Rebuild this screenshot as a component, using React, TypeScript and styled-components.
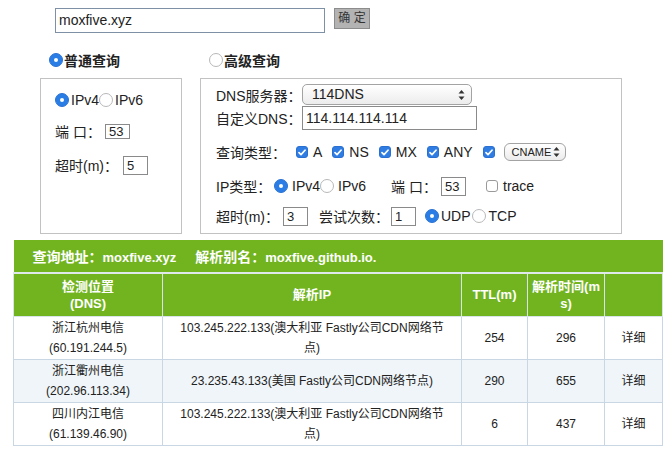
import React from "react";
import styled, { createGlobalStyle, css } from "styled-components";

const Global = createGlobalStyle`
  html, body { margin: 0; padding: 0; background: #fff; }
  body { font-family: "Liberation Sans", "Noto Sans CJK SC", sans-serif; color: #222; font-size: 14px; }
  * { box-sizing: border-box; }
`;

const Page = styled.div`
  width: 669px;
  height: 449px;
  overflow: hidden;
`;

const TopBar = styled.div`
  display: flex;
  align-items: flex-start;
  gap: 9px;
  padding: 8px 0 0 55px;
`;

const DomainInput = styled.div`
  width: 270px;
  height: 25px;
  border: 1px solid #7d90a6;
  padding-left: 3px;
  font-size: 14px;
  line-height: 23px;
`;

const SubmitButton = styled.div`
  width: 36px;
  height: 21px;
  background: #b3b3b3;
  border: 1px solid #8c8c8c;
  font-size: 12px;
  line-height: 19px;
  text-align: center;
  color: #333;
  white-space: nowrap;
`;

const ModeRow = styled.div`
  display: flex;
  align-items: center;
  height: 20px;
  margin-top: 17px;
  padding-left: 49px;
`;

const ModeItem = styled.label<{ $w?: number }>`
  display: flex;
  align-items: center;
  gap: 1px;
  width: ${(p) => (p.$w ? `${p.$w}px` : "auto")};
  font-size: 14px;
  font-weight: bold;
  color: #222;
`;

const Radio = styled.span<{ $on?: boolean }>`
  display: inline-block;
  flex: none;
  width: 14px;
  height: 14px;
  border-radius: 50%;
  ${(p) =>
    p.$on
      ? css`
          background: #2b7de6;
          border: 1px solid #2a72d4;
          &::after {
            content: "";
            display: block;
            width: 4px;
            height: 4px;
            border-radius: 50%;
            background: #fff;
            margin: 4px auto 0;
          }
        `
      : css`
          background: #fff;
          border: 1px solid #b8b8b8;
        `}
`;

const Panels = styled.div`
  display: flex;
  gap: 18px;
  margin-top: 8px;
  padding-left: 40px;
`;

const Box = styled.div<{ $w: number }>`
  width: ${(p) => p.$w}px;
  height: 156px;
  border: 1px solid #c2c2c2;
`;

const LeftInner = styled.div`
  padding: 11px 0 0 14px;
`;

const RightInner = styled.div`
  padding: 5px 0 0 15px;
`;

const Row = styled.div<{ $h: number; $mt?: number }>`
  display: flex;
  align-items: center;
  height: ${(p) => p.$h}px;
  margin-top: ${(p) => p.$mt ?? 0}px;
  font-size: 14px;
`;

const Label = styled.span<{ $w?: number; $ml?: number }>`
  display: inline-block;
  flex: none;
  width: ${(p) => (p.$w ? `${p.$w}px` : "auto")};
  margin-left: ${(p) => p.$ml ?? 0}px;
  white-space: nowrap;
`;

const OptText = styled.span<{ $ml?: number; $mr?: number }>`
  margin-left: ${(p) => p.$ml ?? 3}px;
  margin-right: ${(p) => p.$mr ?? 0}px;
  white-space: nowrap;
`;

const SmallInput = styled.span<{ $ml?: number; $h?: number }>`
  display: inline-block;
  flex: none;
  width: 25px;
  height: ${(p) => p.$h ?? 19}px;
  margin-left: ${(p) => p.$ml ?? 0}px;
  border: 1px solid #8a8a8a;
  font-size: 13px;
  line-height: ${(p) => (p.$h ?? 19) - 2}px;
  padding-left: 3px;
`;

const Select = styled.div<{ $w: number; $h: number }>`
  position: relative;
  flex: none;
  width: ${(p) => p.$w}px;
  height: ${(p) => p.$h}px;
  border: 1px solid #a3a3a3;
  border-radius: 5px;
  background: linear-gradient(#ffffff, #ececec);
  font-size: 14px;
  line-height: ${(p) => p.$h - 2}px;
  padding-left: 9px;
  color: #222;
  white-space: nowrap;
`;

const SmallSelect = styled(Select)`
  font-size: 11px;
  padding-left: 7px;
  margin-left: 9px;
  border-radius: 6px;
`;

const Arrows = styled.svg<{ $r?: number }>`
  position: absolute;
  right: ${(p) => p.$r ?? 6}px;
  top: 50%;
  transform: translateY(-50%);
`;

const TextField = styled.div`
  width: 175px;
  height: 24px;
  border: 1px solid #8a8a8a;
  font-size: 14px;
  line-height: 22px;
  padding-left: 3px;
`;

const Check = styled.span<{ $on?: boolean; $ml?: number }>`
  display: inline-flex;
  align-items: center;
  justify-content: center;
  flex: none;
  width: 12px;
  height: 12px;
  margin-left: ${(p) => p.$ml ?? 0}px;
  border-radius: 3px;
  ${(p) =>
    p.$on
      ? css`
          background: #2f7de3;
          border: 1px solid #2a70d0;
        `
      : css`
          background: #fff;
          border: 1px solid #9a9a9a;
        `}
`;

const Table = styled.table`
  margin: 6px 0 0 13px;
  width: 649px;
  border-collapse: collapse;
  table-layout: fixed;
`;

const Col = styled.col<{ $w: number }>`
  width: ${(p) => p.$w}px;
`;

const TitleCell = styled.th`
  background: #71b41f;
  color: #fff;
  height: 33px;
  text-align: left;
  padding: 0 0 0 19px;
  font-size: 14px;
  font-weight: bold;
  border-bottom: 2px solid #dfe8ea;
  white-space: nowrap;
`;

const TitleValue = styled.span<{ $mr?: number }>`
  font-size: 13px;
  margin-right: ${(p) => p.$mr ?? 0}px;
`;

const HeadCell = styled.th`
  background: #71b41f;
  color: #fff;
  height: 43px;
  font-size: 13px;
  line-height: 17px;
  font-weight: bold;
  text-align: center;
  border: 1px solid #d9e4ea;
  border-top: none;
  padding: 0 2px;
  word-break: break-all;
`;

const DataRow = styled.tr<{ $alt?: boolean }>`
  background: ${(p) => (p.$alt ? "#eff5f9" : "#fff")};
`;

const Cell = styled.td<{ $pad?: number }>`
  height: 43px;
  border: 1px solid #c9d7e4;
  text-align: center;
  font-size: 12px;
  line-height: 20px;
  color: #222;
  padding: 0 ${(p) => p.$pad ?? 2}px;
`;

const ArrowIcon = ({ r }: { r?: number }) => (
  <Arrows $r={r} width="7" height="11" viewBox="0 0 7 11">
    <path d="M3.5 0.5 L6.5 4 L0.5 4 Z" fill="#333" />
    <path d="M3.5 10.5 L6.5 7 L0.5 7 Z" fill="#333" />
  </Arrows>
);

const Tick = () => (
  <svg width="8" height="7" viewBox="0 0 8 7">
    <path d="M1 3.6 L3 5.6 L7 1.2" fill="none" stroke="#fff" strokeWidth="1.7" strokeLinecap="round" strokeLinejoin="round" />
  </svg>
);

const rows = [
  { loc: "浙江杭州电信", ip: "(60.191.244.5)", res: "103.245.222.133(澳大利亚 Fastly公司CDN网络节点)", ttl: "254", time: "296" },
  { loc: "浙江衢州电信", ip: "(202.96.113.34)", res: "23.235.43.133(美国 Fastly公司CDN网络节点)", ttl: "290", time: "655" },
  { loc: "四川内江电信", ip: "(61.139.46.90)", res: "103.245.222.133(澳大利亚 Fastly公司CDN网络节点)", ttl: "6", time: "437" },
];

export default function App() {
  return (
    <Page>
      <Global />
      <TopBar>
        <DomainInput>moxfive.xyz</DomainInput>
        <SubmitButton>确&nbsp;定</SubmitButton>
      </TopBar>
      <ModeRow>
        <ModeItem $w={160}>
          <Radio $on />
          普通查询
        </ModeItem>
        <ModeItem>
          <Radio />
          高级查询
        </ModeItem>
      </ModeRow>
      <Panels>
        <Box $w={142}>
          <LeftInner>
            <Row $h={20}>
              <Radio $on />
              <OptText $ml={2}>IPv4</OptText>
              <Radio />
              <OptText $ml={2}>IPv6</OptText>
            </Row>
            <Row $h={20} $mt={11}>
              <Label $w={50}>端 口：</Label>
              <SmallInput $h={15}>53</SmallInput>
            </Row>
            <Row $h={20} $mt={14}>
              <Label $w={68}>超时(m)：</Label>
              <SmallInput $h={19}>5</SmallInput>
            </Row>
          </LeftInner>
        </Box>
        <Box $w={422}>
          <RightInner>
            <Row $h={21}>
              <Label $w={86}>DNS服务器：</Label>
              <Select $w={170} $h={21}>
                114DNS
                <ArrowIcon />
              </Select>
            </Row>
            <Row $h={24} $mt={1}>
              <Label $w={86}>自定义DNS：</Label>
              <TextField>114.114.114.114</TextField>
            </Row>
            <Row $h={24} $mt={10}>
              <Label $w={80}>查询类型：</Label>
              <Check $on><Tick /></Check>
              <OptText $ml={5} $mr={10}>A</OptText>
              <Check $on><Tick /></Check>
              <OptText $ml={5} $mr={10}>NS</OptText>
              <Check $on><Tick /></Check>
              <OptText $ml={5} $mr={10}>MX</OptText>
              <Check $on><Tick /></Check>
              <OptText $ml={5} $mr={10}>ANY</OptText>
              <Check $on><Tick /></Check>
              <SmallSelect $w={62} $h={18}>
                CNAME
                <ArrowIcon r={5} />
              </SmallSelect>
            </Row>
            <Row $h={24} $mt={10}>
              <Label $w={58}>IP类型：</Label>
              <Radio $on />
              <OptText $ml={4}>IPv4</OptText>
              <Radio />
              <OptText $ml={4}>IPv6</OptText>
              <Label $ml={25} $w={50}>端 口：</Label>
              <SmallInput $h={19}>53</SmallInput>
              <Check $ml={20} />
              <OptText $ml={5}>trace</OptText>
            </Row>
            <Row $h={24} $mt={6}>
              <Label $w={67}>超时(m)：</Label>
              <SmallInput $h={19}>3</SmallInput>
              <Label $ml={11} $w={72}>尝试次数：</Label>
              <SmallInput $h={19}>1</SmallInput>
              <Label $ml={9} />
              <Radio $on />
              <OptText $ml={2} $mr={1}>UDP</OptText>
              <Radio />
              <OptText $ml={3}>TCP</OptText>
            </Row>
          </RightInner>
        </Box>
      </Panels>
      <Table>
        <colgroup>
          <Col $w={149} />
          <Col $w={299} />
          <Col $w={66} />
          <Col $w={77} />
          <Col $w={58} />
        </colgroup>
        <thead>
          <tr>
            <TitleCell colSpan={5}>
              查询地址：<TitleValue $mr={19}>moxfive.xyz</TitleValue>解析别名：<TitleValue>moxfive.github.io.</TitleValue>
            </TitleCell>
          </tr>
          <tr>
            <HeadCell>检测位置<br />(DNS)</HeadCell>
            <HeadCell>解析IP</HeadCell>
            <HeadCell>TTL(m)</HeadCell>
            <HeadCell>解析时间(ms)</HeadCell>
            <HeadCell></HeadCell>
          </tr>
        </thead>
        <tbody>
          {rows.map((r, i) => (
            <DataRow key={i} $alt={i === 1}>
              <Cell>{r.loc}<br />{r.ip}</Cell>
              <Cell $pad={16}>{r.res}</Cell>
              <Cell>{r.ttl}</Cell>
              <Cell>{r.time}</Cell>
              <Cell>详细</Cell>
            </DataRow>
          ))}
        </tbody>
      </Table>
    </Page>
  );
}
